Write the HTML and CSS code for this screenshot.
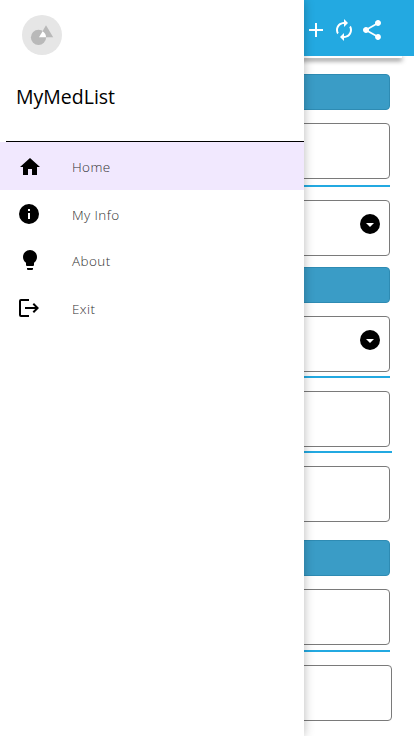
FILE: index.html
```html
<!DOCTYPE html>
<html lang="en">
<head>
<meta charset="utf-8">
<title>MyMedList</title>
<link rel="stylesheet" href="styles.css">
</head>
<body>
<div class="app">
  <header class="bar">
    <svg class="tool" viewBox="0 0 24 24"><path d="M19 13h-6v6h-2v-6H5v-2h6V5h2v6h6z"/></svg>
    <svg class="tool" viewBox="0 0 24 24"><path d="M12 6v3l4-4-4-4v3c-4.42 0-8 3.58-8 8 0 1.57.46 3.03 1.24 4.26L6.7 14.8A5.87 5.87 0 0 1 6 12c0-3.31 2.69-6 6-6zm6.76 1.74L17.3 9.2c.44.84.7 1.79.7 2.8 0 3.31-2.69 6-6 6v-3l-4 4 4 4v-3c4.42 0 8-3.58 8-8 0-1.57-.46-3.03-1.24-4.26z"/></svg>
    <svg class="tool" viewBox="0 0 24 24"><path d="M18 16.08c-.76 0-1.44.3-1.96.77L8.91 12.7c.05-.23.09-.46.09-.7s-.04-.47-.09-.7l7.05-4.11c.54.5 1.25.81 2.04.81 1.66 0 3-1.34 3-3s-1.34-3-3-3-3 1.34-3 3c0 .24.04.47.09.7L8.04 9.81C7.5 9.31 6.79 9 6 9c-1.66 0-3 1.34-3 3s1.34 3 3 3c.79 0 1.5-.31 2.04-.81l7.12 4.16c-.05.21-.08.43-.08.65 0 1.61 1.31 2.92 2.92 2.92s2.92-1.31 2.92-2.92-1.31-2.92-2.92-2.92z"/></svg>
  </header>
  <div class="strip"></div>
  <main class="form">
    <div class="section"></div>
    <div class="field"></div>
    <div class="rule rule-low"></div>
    <div class="field"><svg class="drop" viewBox="0 0 20 20"><circle cx="10" cy="10" r="10"/><path d="M6 9h8l-4 4z" fill="#fff"/></svg></div>
    <div class="section section-mid"></div>
    <div class="field"><svg class="drop" viewBox="0 0 20 20"><circle cx="10" cy="10" r="10"/><path d="M6 9h8l-4 4z" fill="#fff"/></svg></div>
    <div class="rule"></div>
    <div class="field"></div>
    <div class="rule wide"></div>
    <div class="field"></div>
    <div class="section section-last"></div>
    <div class="field"></div>
    <div class="rule rule-end"></div>
    <div class="field wide"></div>
  </main>
</div>
<aside class="drawer">
  <div class="head">
    <svg class="avatar" viewBox="0 0 40 40"><circle cx="20" cy="20" r="20" fill="#e6e6e6"/><circle cx="16.5" cy="22.4" r="7.6" fill="#b9b9b9"/><path fill="#b9b9b9" d="M24 10.3l7.2 12H17z"/><path fill="#fff" d="M20.6 16.2a7.6 7.6 0 0 1 3.5 6.1H17z"/></svg>
    <h1 class="title">MyMedList</h1>
  </div>
  <nav class="menu">
    <a class="item active"><svg class="icon" viewBox="0 0 24 24"><path d="M10 20v-6h4v6h5v-8h3L12 3 2 12h3v8z"/></svg><span>Home</span></a>
    <a class="item shift"><svg class="icon raise" viewBox="0 0 24 24"><path d="M12 2a10 10 0 1 0 0 20 10 10 0 0 0 0-20zm1 15h-2v-6h2zm0-8h-2V7h2z"/></svg><span>My Info</span></a>
    <a class="item short"><svg class="icon raise" viewBox="0 0 24 24"><path d="M12 2a7 7 0 0 0-7 7c0 2.38 1.19 4.47 3 5.74V17a1 1 0 0 0 1 1h6a1 1 0 0 0 1-1v-2.26c1.81-1.27 3-3.36 3-5.74a7 7 0 0 0-7-7zM9 21a1 1 0 0 0 1 1h4a1 1 0 0 0 1-1v-1H9z"/></svg><span>About</span></a>
    <a class="item shift"><svg class="icon raise" viewBox="0 0 24 24"><path d="M17 7l-1.41 1.41L18.17 11H8v2h10.17l-2.58 2.58L17 17l5-5zM4 5h8V3H4a2 2 0 0 0-2 2v14a2 2 0 0 0 2 2h8v-2H4z"/></svg><span>Exit</span></a>
  </nav>
</aside>
</body>
</html>
```
FILE: styles.css
```css
* { box-sizing: border-box; }
body {
  margin: 0;
  position: relative;
  width: 414px;
  height: 736px;
  overflow: hidden;
  background: #fff;
  font-family: "Open Sans", "Noto Sans", sans-serif;
}
svg { display: block; }
.app { height: 736px; }
.bar {
  position: relative;
  height: 56px;
  background: #23a9e1;
  display: flex;
  justify-content: flex-end;
  gap: 4px;
  padding: 18px 30px 0 0;
}
.tool { width: 24px; height: 24px; fill: #fff; }
.strip {
  height: 2px;
  margin-right: 12px;
  background: #fff;
  box-shadow: 0 2px 5px rgba(0, 0, 0, .85);
}
.form {
  display: flex;
  flex-direction: column;
  padding: 16px 24px 0;
}
.section {
  height: 36px;
  margin-bottom: 13px;
  background: #3a9cc6;
  border: 1px solid #2e8bb3;
  border-radius: 4px;
}
.section-mid { margin-top: 11px; }
.section-last { margin-top: 18px; }
.field {
  height: 56px;
  border: 1px solid #7a7a7a;
  border-radius: 4px;
  padding: 13px 9px 0 0;
  display: flex;
  justify-content: flex-end;
}
.rule { height: 2px; margin-top: 4px; margin-bottom: 13px; background: #23a9e1; }
.rule-low { margin-top: 6px; }
.rule-end { margin-top: 5px; }
.wide { margin-right: -2px; }
.drop { width: 20px; height: 20px; }
.drawer {
  position: absolute;
  top: 0;
  left: 0;
  width: 304px;
  height: 736px;
  background: #fff;
  box-shadow: 0 0 10px rgba(0, 0, 0, .28);
}
.head {
  height: 142px;
  margin-left: 6px;
  padding: 15px 0 0 10px;
  border-bottom: 1px solid #000;
}
.avatar { width: 40px; height: 40px; margin-left: 6px; }
.title {
  margin: 28px 0 0;
  font-size: 19.5px;
  line-height: 28px;
  font-weight: 400;
  color: #000;
}
.item {
  display: flex;
  align-items: center;
  gap: 30px;
  height: 48px;
  padding: 2px 0 0 18px;
  font-family: "Open Sans", "Noto Sans", sans-serif;
  font-size: 13.5px;
  font-weight: 300;
  letter-spacing: .4px;
  color: #333;
}
.active { background: #f1e8fe; }
.short { height: 46px; padding-top: 0; }
.shift { padding-left: 17px; gap: 31px; }
.icon { width: 24px; height: 24px; fill: #000; }
.raise { margin-bottom: 2px; }
```
